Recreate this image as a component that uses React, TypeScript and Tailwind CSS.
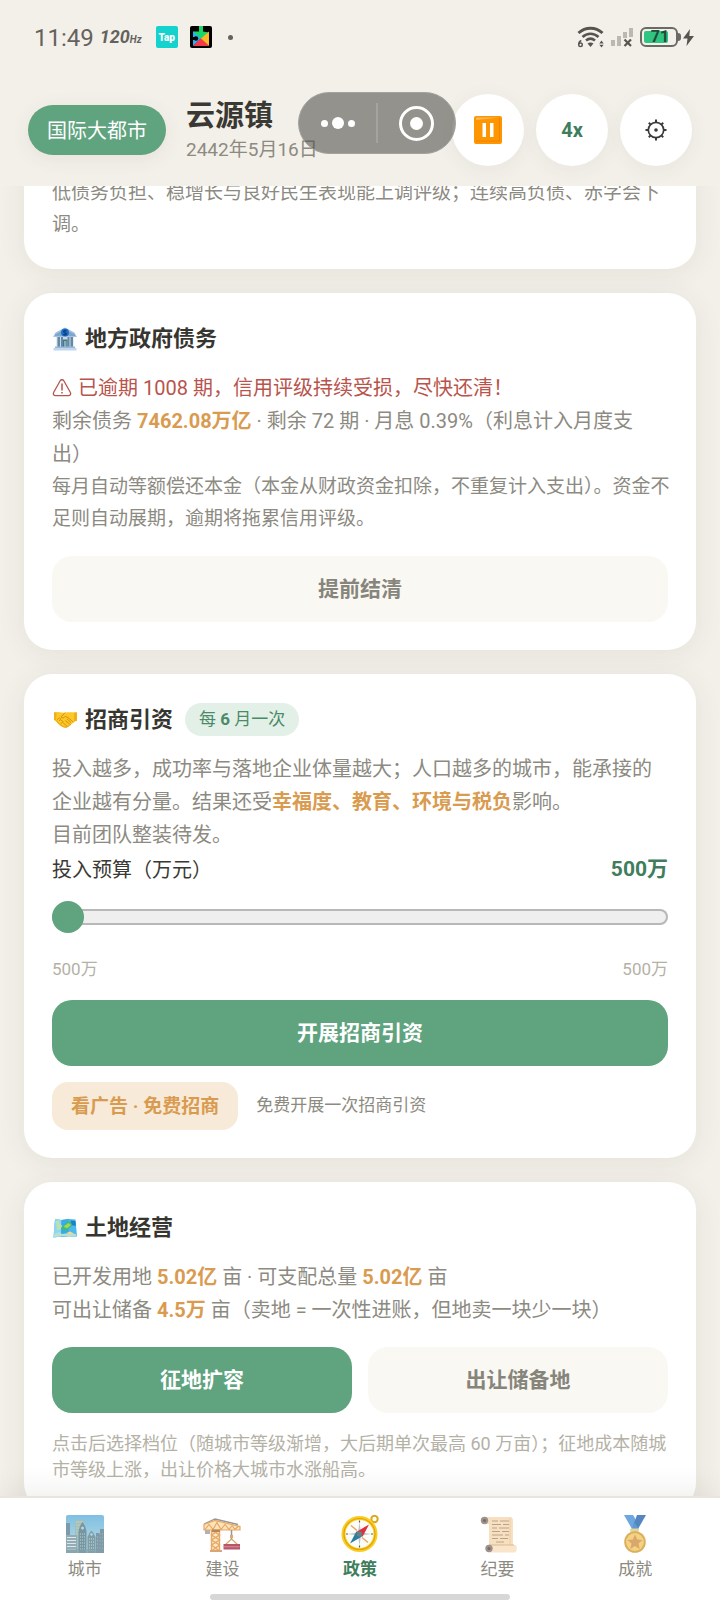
import type { ReactNode } from "react";

const BankIcon = () => (
  <svg viewBox="0 0 26 26" className="size-[26px]" aria-hidden="true">
    <path d="M1 12 3.500 7.500 13 2.500l9.500 5L25 12z" fill="#a9c4e0" />
    <path d="M3 9.500 13 4l10 5.500v1.500H3z" fill="#7fa6cd" />
    <circle cx="13" cy="7.500" r="4" fill="#1b74c8" />
    <path d="M14.800 6.100c-.4-.8-3.400-1-3.400.5s3.400.8 3.400 2.200-3 1.300-3.600.3M13 4.500v6.200" fill="none" stroke="#123f86" strokeWidth="1.100" />
    <path d="M4.500 12h17v10h-17z" fill="#c9d9e8" />
    <path d="M5.500 12H8v10H5.500zM9 12h2v10H9zM15.500 12h2v10h-2zM18.500 12H21v10h-2.500z" fill="#6489a5" />
    <path d="M11 14.500h4.500V23H11z" fill="#47738c" />
    <path d="M12 16h2.500v7H12z" fill="#86aeb4" />
    <path d="M3 21.500h20V23H3z" fill="#97b9da" />
    <path d="M1.500 23h23v2.500h-23z" fill="#c0d6ef" />
  </svg>
);

const HandshakeIcon = () => (
  <svg viewBox="0 0 26 26" className="size-[26px]" aria-hidden="true">
    <path d="M2 6.500 6.500 6c2.500.7 4.500 1 6.500.7 2.500-.6 4.500-.6 6.500-.4l5.500.2v8l-3 1.500-4 3.500-3.500 2.300-3-.5-4-2-4-4.300-1.500-1z" fill="#fbc826" />
    <path d="m2 6.500 2.500-.3L4 14.500 2 13.800zM25 6.500l-2.800-.1-.2 9.100 3-1z" fill="#efae1c" />
    <path d="m13 6.700-4 4.300c.8 1.600 2.900 1.200 4.300-.6 1.700.2 6.200 3.600 7.700 5.600M17.500 18l-4-3.200M15 20.200l-3.800-3.400M18.800 16.300l-3.600-3.200M5.500 13.500l1.700-1.700L8.800 13l-1.400 1.700M9.500 14.500l1.500 1-1.800 2" fill="none" stroke="#d28a14" strokeWidth=".9" strokeLinecap="round" />
    <path d="M4.500 14.500c2 3 4.500 5.300 7.500 6.500 3 1 5-1.300 7-2.800" fill="none" stroke="#e39a12" strokeWidth=".9" />
  </svg>
);

const MapIcon = () => (
  <svg viewBox="0 0 26 26" className="size-[26px]" aria-hidden="true">
    <path d="m3 5 6.500 1 7-1 7 .5L25 22.500l-8.200.5L9 22.500l-7.500 1z" fill="#4db8ef" />
    <path d="M9.500 6 9 22.500l-7.500 1L3 5z" fill="#8fd5f6" />
    <path d="m16.500 5 .3 18L9 22.500 9.500 6z" fill="#3caae8" />
    <path d="m3.800 7 3-.5 1 3 2.500 2.500-1.500 3-3.800 1.500z" fill="#b9e2ae" />
    <path d="m9 13.500 4-3 2.500-3.500 5 1 1.500 3.500-4 1.500-3 4-5-1z" fill="#3fb78a" />
    <path d="m11.500 12.500 5-3.500 2.500 2-4 3.500z" fill="#a3d94e" />
    <path d="m18.500 6.500 5 .5.4 5-3.900-1z" fill="#1682cc" />
    <path d="m2.500 20 4.500-2 3 2 6.500-1 7 1 .9 2-7.600 1L9 22l-7.300 1z" fill="#b9e0d2" />
    <path d="m15 18.500 3-1 4 2-4 1z" fill="#f0d98c" />
  </svg>
);

const PauseIcon = () => (
  <svg viewBox="0 0 28 28" className="size-7" aria-hidden="true">
    <rect width="28" height="28" rx="2" fill="#fd9600" />
    <path d="M2 1.500h23L2 4z" fill="#ffb95a" />
    <path d="M25.500 2v23H2" fill="none" stroke="#f08300" strokeWidth="1" />
    <path d="M8.500 7H12v14H8.500zM16 7h3.500v14H16z" fill="#fff" />
  </svg>
);

const GearIcon = () => (
  <svg viewBox="0 0 22 22" className="size-[22px]" fill="none" stroke="#3b3a36" aria-hidden="true">
    <circle cx="11" cy="11" r="7.700" strokeWidth="1.700" />
    <circle cx="11" cy="11" r="1.800" fill="#3b3a36" stroke="none" />
    <path
      d="M11 .5v3M11 18.500v3M.5 11h3M18.500 11h3M3.800 3.800l1.600 1.600M16.600 16.600l1.600 1.600M3.800 18.200l1.600-1.600M16.600 5.400l1.600-1.600"
      strokeWidth="2"
    />
  </svg>
);

const WarningIcon = () => (
  <svg viewBox="0 0 20 20" className="mr-1.5 inline-block size-5 align-[-3px]" fill="none" stroke="#b8544c" strokeWidth="1.300" aria-hidden="true">
    <path d="M8.200 2.800c.8-1.400 2.800-1.400 3.600 0l6.600 11.700c.8 1.400-.2 3.200-1.800 3.200H3.400c-1.600 0-2.600-1.800-1.800-3.200z" />
    <path d="M10 5.500v7M10 14v1.600" strokeWidth="1.500" />
  </svg>
);

const CityIcon = () => (
  <svg viewBox="0 0 38 38" className="size-[38px]" aria-hidden="true">
    <defs>
      <linearGradient id="sky" x1="0" y1="0" x2="0" y2="1">
        <stop offset="0" stopColor="#4ba5d5" />
        <stop offset="1" stopColor="#9fd2da" />
      </linearGradient>
    </defs>
    <rect width="38" height="38" rx="2" fill="url(#sky)" />
    <path d="M9 5h9v33H9z" fill="#78a5a4" />
    <path d="M10 7h7M10 10h7M10 13h7M10 16h7M10 19h7" stroke="#a5bd9f" strokeWidth="1" />
    <path d="M0 8h4v12H0zM30 18h4v-4h4v24h-8z" fill="#486f83" />
    <path d="M0 20h11v18H0z" fill="#66899a" />
    <path d="M1 22.500h9M1 25.500h9M1 28.500h9M1 31.500h9M1 34.500h9" stroke="#cfdfe0" strokeWidth="1" />
    <path d="M12.500 16 14 11l2.500-4L19 11l1.500 5v22h-8z" fill="#3f6a7a" />
    <circle cx="16.500" cy="13" r="1.500" fill="#a0c4ca" />
    <path d="M14.500 18v18M16.500 18v18M18.500 18v18" stroke="#7ba4ac" strokeWidth=".8" strokeDasharray="2 1" />
    <path d="m21.500 22 2-4 2-2.500 2 2.500 2 4v16h-8z" fill="#497582" />
    <circle cx="25.500" cy="19.500" r="1.200" fill="#a9c8ca" />
    <path d="M23.500 23v13M25.500 23v13M27.500 23v13" stroke="#8bb0b5" strokeWidth=".8" strokeDasharray="2 1" />
    <path d="M31.500 21v14M34 18v17M36.300 18v17" stroke="#7396a0" strokeWidth=".8" strokeDasharray="2 1.500" />
    <path d="M0 34h38v4H0z" fill="#4f7c88" opacity=".6" />
  </svg>
);

const CraneIcon = () => (
  <svg viewBox="0 0 38 38" className="size-[38px]" aria-hidden="true">
    <path d="M2 14v5h5v-5z" fill="#8d939c" />
    <path d="M1 9 12 4l23 5.500M12 4v6" fill="none" stroke="#6d6b6b" strokeWidth="1.300" />
    <path d="M1 9.500 12 5.500l25 6V15H1z" fill="#fbd89d" />
    <path d="M1 9.500 12 5.500l25 6V15H1zM2 14.500l4-5 4 5 4-7 4 7 4-5 4 5 3-4 3 4 3-3" fill="none" stroke="#dd8523" strokeWidth="1.200" />
    <path d="M8.500 15h8v21h-8z" fill="#fbdcab" />
    <path d="M8.500 15v21M16.500 15v21M8.500 15l8 5-8 5 8 5-8 6M16.500 15l-8 5 8 5-8 5 8 6" fill="none" stroke="#dd8523" strokeWidth="1.400" />
    <path d="M9 14.500h8V17H9z" fill="#9d521a" />
    <path d="M7 35h12v2H7z" fill="#cd8138" />
    <path d="M28.500 15v10" stroke="#6d6b6b" strokeWidth="1.500" />
    <path d="M27 20h3v3h-3z" fill="#d08335" />
    <path d="m28.500 24-6 5.500M28.500 24l6 5.500" stroke="#cb8628" strokeWidth="1.200" />
    <path d="M20.500 29H37v5.500H20.500z" fill="#9a1029" />
    <path d="M21 31.800h15.500" stroke="#d3616e" strokeWidth="1" />
  </svg>
);

const CompassIcon = () => (
  <svg viewBox="0 0 38 38" className="size-[38px]" aria-hidden="true">
    <circle cx="33.500" cy="4" r="3.200" fill="none" stroke="#dca813" strokeWidth="2" />
    <circle cx="18.500" cy="19" r="18" fill="#fbcd20" />
    <circle cx="18.500" cy="19" r="15.500" fill="none" stroke="#e0a40f" strokeWidth="1.200" />
    <circle cx="18.500" cy="19" r="14" fill="#fdfdf8" />
    <path d="m18.500 7 1.500 10.500L30.500 19 20 20.500 18.500 31 17 20.500 6.500 19 17 17.500z" fill="#c0c6c7" />
    <path d="m10 10.500 6 5M27 27.500l-6-5" stroke="#efa370" strokeWidth="1.600" />
    <path d="m28 9.500-6.500 12.200-5.500-5.200z" fill="#e02f3b" />
    <path d="m9 28.500 6.500-12.200 5.500 5.200z" fill="#287da0" />
    <circle cx="18.500" cy="19" r="2.800" fill="#697e88" />
    <path d="M18.500 5.500v2M18.500 30.500v2M5 19h2M30 19h2" stroke="#5a5a52" strokeWidth="1.200" />
  </svg>
);

const ScrollIcon = () => (
  <svg viewBox="0 0 38 38" className="size-[38px]" aria-hidden="true">
    <path d="M5 2h26c2.500 0 3 2 3 4v25H10V9H5z" fill="#f5d3a7" />
    <path d="M31 3v27" stroke="#edc18c" strokeWidth="1.500" />
    <path d="M8 30h28.500c1.500 1 2 6-.5 7.500H10z" fill="#f9dbb6" />
    <path d="M10 30h25" stroke="#cb9b60" strokeWidth="1" />
    <circle cx="5.500" cy="5.500" r="3.700" fill="#76655a" />
    <circle cx="5.500" cy="5.500" r="1.600" fill="#3a302a" />
    <circle cx="10" cy="33.500" r="3.700" fill="#76655a" />
    <circle cx="10" cy="33.500" r="1.600" fill="#3a302a" />
    <path d="M13 6h6M21 6h9M13 9.500h9M24 9.500h6M13 13h5M20 13h10M13 16.500h8M23 16.500h7M13 20h11M26 20h4M13 23.500h6M21 23.500h8M17 27h8" stroke="#9e7c57" strokeWidth="1.100" />
  </svg>
);

const MedalIcon = () => (
  <svg viewBox="0 0 38 38" className="size-[38px]" aria-hidden="true">
    <path d="M8 0h9l5.500 9-3.500 5h-3z" fill="#3183d3" />
    <path d="M21 0h9l-8 14h-4l-1-3z" fill="#0c55a5" />
    <path d="m19 8 3.500 6h-7z" fill="#1d73c2" />
    <rect x="14" y="13.500" width="9" height="3.500" rx="1.500" fill="#dac577" />
    <circle cx="19" cy="27" r="10.800" fill="#cb8f15" />
    <circle cx="19" cy="27" r="8.900" fill="#f0bf50" />
    <path d="m19 19.500 2.200 5 5.400.5-4.100 3.600 1.200 5.300L19 31.100l-4.700 2.800 1.200-5.300-4.100-3.600 5.400-.5z" fill="#cb832d" />
  </svg>
);

const PlayIcon = () => (
  <svg viewBox="0 0 22 22" className="size-[22px]" aria-hidden="true">
    <rect width="22" height="22" rx="2" fill="#000" />
    <path d="M3 5.500h10l6 1-8 7-8-2z" fill="#18d86c" />
    <path d="M3 5.500V20l8-7.500z" fill="#27b2f5" />
    <path d="M3 20h16l-8-8z" fill="#f5394b" />
    <path d="m11 12.500 8-7v14.500z" fill="#fdb827" />
    <path d="M9 0h4v6H9z" fill="#18d86c" />
    <circle cx="6" cy="12.500" r="2.200" fill="#000" />
    <path d="M2 11h4v3H2z" fill="#000" />
  </svg>
);

const WifiIcon = () => (
  <svg viewBox="0 0 27 22" className="h-[22px] w-[27px]" fill="none" stroke="#56544f" aria-hidden="true">
    <path d="M1.500 7c7-6.500 17-6.500 24 0" strokeWidth="3" />
    <path d="M5.500 11c4.700-4.300 11.300-4.300 16 0M9 14.500c2.800-2.300 6.200-2.300 9 0" strokeWidth="2.600" />
    <path d="m13.500 21-3-3.500c1.700-1.500 4.300-1.500 6 0z" fill="#56544f" stroke="none" />
    <circle cx="3.500" cy="18.800" r="1.800" strokeWidth="1.400" />
    <path d="M1.700 18.500c0-2 .8-3.300 2.600-4" strokeWidth="1.400" />
    <path d="m24.500 14.500 2.200 2.900h-4.400zM24.500 21.600l2.200-2.900h-4.400z" fill="#56544f" stroke="none" />
  </svg>
);

const SignalIcon = () => (
  <svg viewBox="0 0 22 20" className="h-5 w-[22px]" aria-hidden="true">
    <path d="M0 13h4v6H0zM6 9h4v10H6zM12 5h4v6h-4zM18 1h4v9h-4z" fill="#bbb8b2" />
    <path d="m13.500 12.500 6.500 6.500M20 12.500 13.500 19" stroke="#56544f" strokeWidth="2.200" />
  </svg>
);

const tabs = [
  { icon: CityIcon, label: "城市", active: false },
  { icon: CraneIcon, label: "建设", active: false },
  { icon: CompassIcon, label: "政策", active: true },
  { icon: ScrollIcon, label: "纪要", active: false },
  { icon: MedalIcon, label: "成就", active: false },
];

const Em = ({ children }: { children: ReactNode }) => <strong className="font-bold text-[#d99b50]">{children}</strong>;

function Card({ children }: { children: ReactNode }) {
  return (
    <section className="rounded-[28px] bg-white p-7 shadow-[0_4px_28px_rgba(70,60,30,0.08)]">{children}</section>
  );
}

function CardTitle({ icon, title, children }: { icon: ReactNode; title: string; children?: ReactNode }) {
  return (
    <div className="mb-[17px] flex h-[34px] items-center">
      {icon}
      <h2 className="ml-[7px] text-[22px] font-bold text-[#363530]">{title}</h2>
      {children}
    </div>
  );
}

function ActionButton({ primary, children }: { primary?: boolean; children: ReactNode }) {
  return (
    <button
      type="button"
      className={
        primary
          ? "h-[66px] w-full rounded-[20px] bg-[#5fa37f] pt-0.5 text-[21px] font-bold text-white"
          : "h-[66px] w-full rounded-[20px] bg-[#f9f8f3] pt-0.5 text-[21px] font-bold text-[#87857b]"
      }
    >
      {children}
    </button>
  );
}

function StatusBar() {
  return (
    <div className="flex h-[74px] items-center pr-[26px] pl-[34px] text-[#65625d]">
      <span className="pt-0.5 text-2xl">11:49</span>
      <span className="ml-1.5 flex items-baseline font-bold italic">
        <span className="text-lg">120</span>
        <span className="text-[10px]">Hz</span>
      </span>
      <span className="ml-3.5 flex size-[22px] items-center justify-center rounded-[2px] bg-[#14d3cf] text-[10px] font-black text-white">
        Tap
      </span>
      <span className="ml-3">
        <PlayIcon />
      </span>
      <span className="ml-4 size-[5px] rounded-full bg-[#65625d]" />
      <div className="ml-auto flex items-center">
        <WifiIcon />
        <span className="ml-[7px]">
          <SignalIcon />
        </span>
        <span className="ml-[7px] flex h-5 w-[38px] items-center rounded-md border-2 border-[#6b6964] p-0.5">
          <span className="flex h-full w-6 items-center justify-center rounded-[2px] bg-[#2fc481] pl-2 text-base font-bold text-[#234b38]">
            71
          </span>
        </span>
        <span className="h-2 w-[3px] rounded-r-sm bg-[#6b6964]" />
        <svg viewBox="0 0 11 17" className="ml-0.5 h-[17px] w-[11px]" aria-hidden="true">
          <path d="M7 0 0 9.500h4.500L3.500 17 11 7H6.300z" fill="#56544f" />
        </svg>
      </div>
    </div>
  );
}

export default function App() {
  return (
    <div className="relative flex h-screen flex-col overflow-hidden bg-[#f3f0ea] font-['Roboto','Noto_Sans_CJK_SC',sans-serif] text-[#8c8a81]" lang="zh-CN">
      <header className="relative z-10 shrink-0 bg-[#f3f0ea]">
        <StatusBar />
        <div className="flex items-center gap-3 px-7 pt-5 pb-5">
          <span className="flex h-[50px] items-center rounded-full bg-[#5fa37f] px-[19px] pt-0.5 text-xl text-white shadow-[0_4px_20px_rgba(70,60,30,0.07)]">
            国际大都市
          </span>
          <div className="mr-auto ml-2 pt-0.5">
            <h1 className="text-[29px] leading-[38px] font-bold text-[#3a3833]">云源镇</h1>
            <p className="text-[19px] leading-[30px]">2442年5月16日</p>
          </div>
          <button type="button" aria-label="暂停" className="flex size-[72px] items-center justify-center rounded-full bg-white shadow-[0_4px_20px_rgba(70,60,30,0.06)]">
            <PauseIcon />
          </button>
          <button type="button" className="size-[72px] rounded-full bg-white text-xl font-bold text-[#3f7d5c] shadow-[0_4px_20px_rgba(70,60,30,0.06)]">
            4x
          </button>
          <button type="button" aria-label="设置" className="flex size-[72px] items-center justify-center rounded-full bg-white shadow-[0_4px_20px_rgba(70,60,30,0.06)]">
            <GearIcon />
          </button>
        </div>
        <div className="absolute top-[92px] right-[264px] flex h-[62px] w-[158px] items-center rounded-full border border-[#a5a39e] bg-[#55534f]/60">
          <button type="button" aria-label="更多" className="flex flex-1 items-center justify-center gap-1">
            <span className="size-[7px] rounded-full bg-white" />
            <span className="size-3 rounded-full bg-white" />
            <span className="size-[7px] rounded-full bg-white" />
          </button>
          <span className="h-10 w-0.5 bg-[#a5a39e]" />
          <button type="button" aria-label="关闭" className="flex flex-1 items-center justify-center">
            <span className="flex size-[35px] items-center justify-center rounded-full border-[3px] border-white">
              <span className="size-[13px] rounded-full bg-white" />
            </span>
          </button>
        </div>
      </header>

      <main className="min-h-0 flex-1 overflow-hidden px-6">
        <div className="-mt-[37px] flex flex-col gap-6">
          <Card>
            <p className="text-[19px] leading-8">低债务负担、稳增长与良好民生表现能上调评级；连续高负债、赤字会下调。</p>
          </Card>

          <Card>
            <CardTitle icon={<BankIcon />} title="地方政府债务" />
            <p className="text-xl leading-[33px] text-[#b8544c]">
              <WarningIcon />
              已逾期 1008 期，信用评级持续受损，尽快还清！
            </p>
            <p className="text-xl leading-[33px]">
              剩余债务 <Em>7462.08万亿</Em> · 剩余 72 期 · 月息 0.39%（利息计入月度支
              <br />
              出）
            </p>
            <p className="mb-[21px] text-[19px] leading-8 whitespace-nowrap">
              每月自动等额偿还本金（本金从财政资金扣除，不重复计入支出）。资金不
              <br />
              足则自动展期，逾期将拖累信用评级。
            </p>
            <ActionButton>提前结清</ActionButton>
          </Card>

          <Card>
            <CardTitle icon={<HandshakeIcon />} title="招商引资">
              <span className="ml-3 rounded-full bg-[#e3f0e7] px-3.5 text-[17px] leading-[33px] text-[#4b8a69]">
                每 <b>6</b> 月一次
              </span>
            </CardTitle>
            <p className="text-xl leading-[33px]">
              投入越多，成功率与落地企业体量越大；人口越多的城市，能承接的
              <br />
              企业越有分量。结果还受<Em>幸福度、教育、环境与税负</Em>影响。
              <br />
              目前团队整装待发。
            </p>
            <div className="flex h-[35px] items-center justify-between">
              <label htmlFor="budget" className="text-xl text-[#3a3833]">
                投入预算（万元）
              </label>
              <output htmlFor="budget" className="text-[21px] font-bold text-[#3f7d5c]">
                500万
              </output>
            </div>
            <input
              id="budget"
              type="range"
              min={500}
              max={500}
              defaultValue={500}
              className="mt-[22px] mb-8 block h-4 w-full appearance-none rounded-full bg-[#efefef] shadow-[inset_0_0_0_2px_#b8b8b8] [&::-webkit-slider-thumb]:size-8 [&::-webkit-slider-thumb]:appearance-none [&::-webkit-slider-thumb]:rounded-full [&::-webkit-slider-thumb]:bg-[#5fa37f]"
            />
            <div className="mb-[19px] flex justify-between text-[17px] leading-6 text-[#b4b1a6]">
              <span>500万</span>
              <span>500万</span>
            </div>
            <ActionButton primary>开展招商引资</ActionButton>
            <div className="mt-4 flex items-center gap-[18px]">
              <button type="button" className="h-12 rounded-2xl bg-[#f7ead8] px-[19px] pt-0.5 text-[19px] font-bold text-[#d99b50]">
                看广告 · 免费招商
              </button>
              <span className="text-[17px]">免费开展一次招商引资</span>
            </div>
          </Card>

          <Card>
            <CardTitle icon={<MapIcon />} title="土地经营" />
            <p className="mb-5 text-xl leading-[33px]">
              已开发用地 <Em>5.02亿</Em> 亩 · 可支配总量 <Em>5.02亿</Em> 亩
              <br />
              可出让储备 <Em>4.5万</Em> 亩（卖地 = 一次性进账，但地卖一块少一块）
            </p>
            <div className="grid grid-cols-2 gap-4">
              <ActionButton primary>征地扩容</ActionButton>
              <ActionButton>出让储备地</ActionButton>
            </div>
            <p className="mt-[18px] text-lg leading-[26px] text-[#b4b1a6]">
              点击后选择档位（随城市等级渐增，大后期单次最高 60 万亩）；征地成本随城市等级上涨，出让价格大城市水涨船高。
            </p>
          </Card>
        </div>
      </main>

      <nav className="relative z-10 grid shrink-0 grid-cols-5 border-t-2 border-[#e8e6dc] bg-white px-4 pt-[17px] pb-[19px] shadow-[0_-4px_28px_rgba(70,60,30,0.09)]">
        {tabs.map((tab) => {
          const Icon = tab.icon;
          return (
            <a
              key={tab.label}
              href="#"
              className={
                tab.active
                  ? "flex flex-col items-center gap-1 text-[17px] leading-6 font-bold text-[#3f7d5c]"
                  : "flex flex-col items-center gap-1 text-[17px] leading-6"
              }
            >
              <span className={tab.active ? "" : "opacity-70"}>
                <Icon />
              </span>
              {tab.label}
            </a>
          );
        })}
        <span className="absolute bottom-0 left-1/2 h-1.5 w-[300px] -translate-x-1/2 rounded-full bg-[#d7d7d7]" />
      </nav>
    </div>
  );
}
